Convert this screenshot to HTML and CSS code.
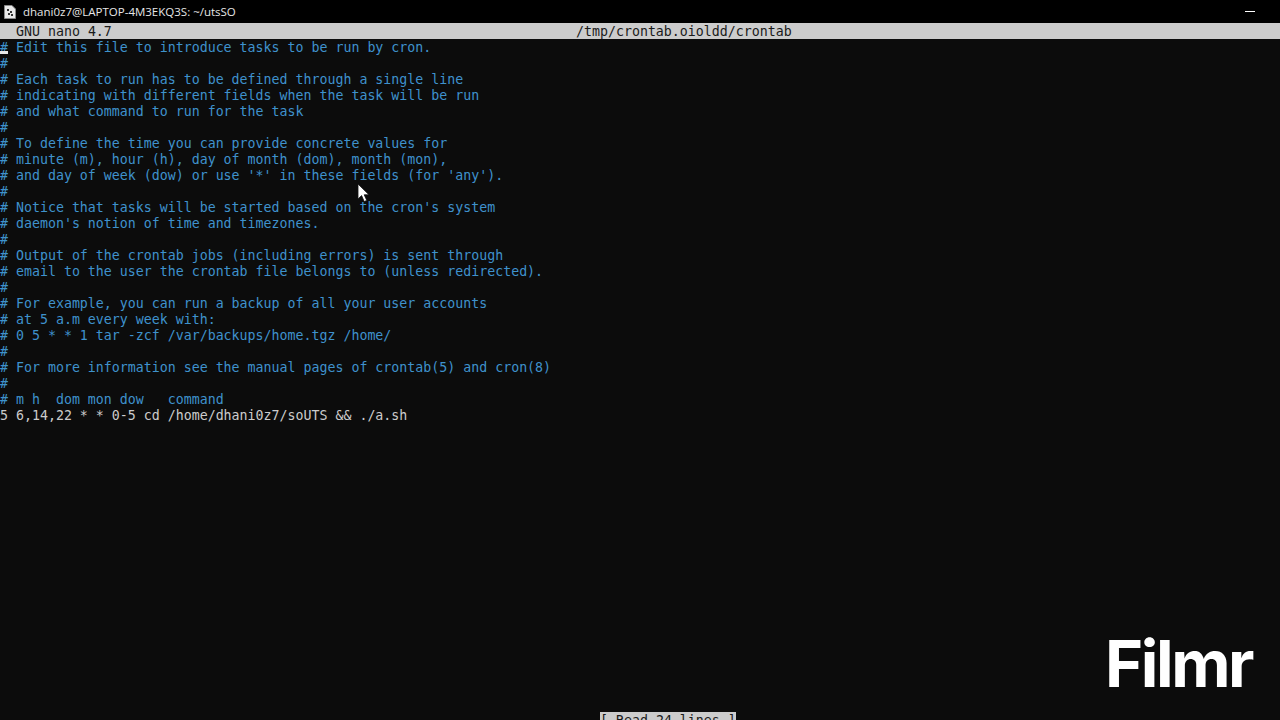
FILE: index.html
```html
<!DOCTYPE html>
<html lang="en">
<head>
    <meta charset="UTF-8">
    <title>dhani0z7@LAPTOP-4M3EKQ3S: ~/utsSO</title>
    <link rel="stylesheet" href="styles.css">
</head>
<body>
    <div class="titlebar">
        <svg class="app-icon" width="12" height="14" viewBox="0 0 12 14">
            <path d="M.5 .5H8L11.5 4V13.5H.5Z" fill="#e8e8e8" stroke="#8a8a8a"/>
            <path d="M3 4h2v2H3zM6 6h2v2H6zM4 8h2v2H4zM7 9h2v2H7z" fill="#333"/>
        </svg>
        <span class="title-text">dhani0z7@LAPTOP-4M3EKQ3S: ~/utsSO</span>
        <div class="minimize"></div>
    </div>
    <div class="nano-header">
        <span class="nano-version">GNU nano 4.7</span>
        <span class="nano-file">/tmp/crontab.oioldd/crontab</span>
    </div>
    <div class="editor">
        <div class="cursor"></div>
<pre class="buffer"># Edit this file to introduce tasks to be run by cron.
#
# Each task to run has to be defined through a single line
# indicating with different fields when the task will be run
# and what command to run for the task
#
# To define the time you can provide concrete values for
# minute (m), hour (h), day of month (dom), month (mon),
# and day of week (dow) or use '*' in these fields (for 'any').
#
# Notice that tasks will be started based on the cron's system
# daemon's notion of time and timezones.
#
# Output of the crontab jobs (including errors) is sent through
# email to the user the crontab file belongs to (unless redirected).
#
# For example, you can run a backup of all your user accounts
# at 5 a.m every week with:
# 0 5 * * 1 tar -zcf /var/backups/home.tgz /home/
#
# For more information see the manual pages of crontab(5) and cron(8)
#
# m h  dom mon dow   command
<span class="job">5 6,14,22 * * 0-5 cd /home/dhani0z7/soUTS &amp;&amp; ./a.sh</span></pre>
        <svg class="pointer" width="14" height="20" viewBox="0 0 14 20">
            <path d="M1 1V16L4.6 12.6L7.2 18.6L9.8 17.4L7.2 11.8H12Z" fill="#fff" stroke="#111" stroke-width=".8"/>
        </svg>
        <div class="watermark">Filmr</div>
    </div>
    <div class="status-row"><span class="status">[ Read 24 lines ]</span></div>
</body>
</html>
```
FILE: styles.css
```css
html, body {
    height: 720px;
    margin: 0;
    overflow: hidden;
}

body {
    display: flex;
    flex-direction: column;
    background: #0c0c0c;
    font-family: "DejaVu Sans Mono", monospace;
    font-size: 13.28px;
    line-height: 16px;
    color: #cccccc;
}

.titlebar {
    display: flex;
    align-items: center;
    flex: 0 0 23px;
    padding-left: 4px;
    background: #000;
    color: #e6e6e6;
    font-family: "Open Sans", sans-serif;
    font-size: 11.5px;
}

.app-icon {
    margin-right: 7px;
}

.title-text {
    flex: 1;
}

.minimize {
    width: 10px;
    height: 1px;
    margin-right: 25px;
    background: #fff;
}

.nano-header {
    display: flex;
    flex: 0 0 16px;
    min-height: 0;
    background: #cccccc;
    color: #1a1a1a;
}

.nano-version {
    width: 560px;
    padding-left: 16px;
}

.nano-version, .nano-file {
    margin-top: 1px;
}

.editor {
    position: relative;
    flex: 0 0 673px;
    min-height: 0;
}

.buffer {
    margin: 1px 0 0;
    font: inherit;
    color: #3f92cc;
}

.job {
    color: #cccccc;
}

.cursor {
    position: absolute;
    left: 0;
    top: 12px;
    width: 8px;
    height: 3px;
    background: #e8e8e8;
}

.pointer {
    position: absolute;
    left: 357px;
    top: 144px;
}

.watermark {
    position: absolute;
    left: 1105px;
    top: 585px;
    color: #fff;
    font-family: "Inter", sans-serif;
    font-size: 65px;
    font-weight: 700;
    line-height: 80px;
    letter-spacing: -2.4px;
}

.status-row {
    flex: 0 0 16px;
    min-height: 0;
    padding-left: 600px;
}

.status {
    display: inline-block;
    padding-top: 1px;
    background: #cccccc;
    color: #1a1a1a;
}
```
